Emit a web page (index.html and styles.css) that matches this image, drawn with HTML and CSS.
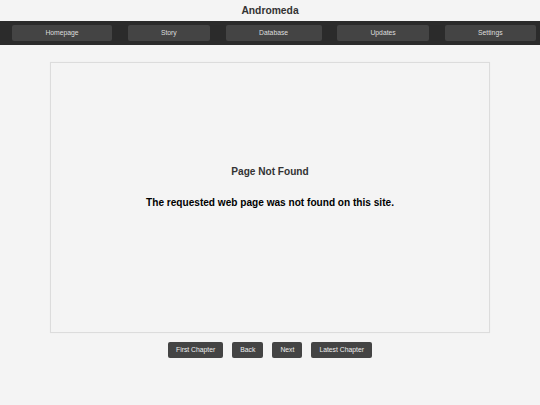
FILE: index.html
```html
<!DOCTYPE html>
<html lang="en">
<head>
<meta charset="utf-8">
<title>Andromeda</title>
<link rel="stylesheet" href="styles.css">
</head>
<body>
<header class="site-header">
  <h1 class="site-title">Andromeda</h1>
</header>
<nav class="main-nav">
  <a class="nav-btn" href="#">Homepage</a>
  <a class="nav-btn" href="#">Story</a>
  <a class="nav-btn" href="#">Database</a>
  <a class="nav-btn" href="#">Updates</a>
  <a class="nav-btn" href="#">Settings</a>
</nav>
<main class="content">
  <section class="card">
    <h2 class="card-title">Page Not Found</h2>
    <p class="card-text">The requested web page was not found on this site.</p>
  </section>
  <div class="pager">
    <a class="pager-btn" href="#">First Chapter</a>
    <a class="pager-btn" href="#">Back</a>
    <a class="pager-btn" href="#">Next</a>
    <a class="pager-btn" href="#">Latest Chapter</a>
  </div>
</main>
</body>
</html>
```

FILE: styles.css
```css
* { box-sizing: border-box; }

html, body {
  margin: 0;
  padding: 0;
  background: #f4f4f4;
  font-family: "Liberation Sans", Arial, sans-serif;
}

.site-header {
  height: 21px;
  display: flex;
  align-items: center;
  justify-content: center;
}

.site-title {
  margin: 0;
  font-size: 10.3px;
  line-height: 21px;
  font-weight: bold;
  color: #333;
}

.main-nav {
  display: flex;
  gap: 15.5px;
  height: 24px;
  padding: 4px 4px 4px 12px;
  background: #2b2b2b;
}

.nav-btn {
  flex: 1 1 auto;
  height: 16px;
  line-height: 16px;
  text-align: center;
  background: #444;
  color: #ddd;
  font-size: 6.8px;
  text-decoration: none;
  border-radius: 2px;
}

.content {
  display: flex;
  flex-direction: column;
  align-items: center;
  padding-top: 17px;
}

.card {
  width: 440px;
  height: 271px;
  border: 1px solid #dcdcdc;
  box-shadow: 0 0 1px rgba(0,0,0,0.06);
  display: flex;
  flex-direction: column;
  align-items: center;
  padding-top: 103px;
  gap: 19.5px;
}

.card-title {
  margin: 0;
  font-size: 10.1px;
  line-height: 11.5px;
  font-weight: bold;
  color: #333;
}

.card-text {
  margin: 0;
  font-size: 10.1px;
  line-height: 11.5px;
  font-weight: bold;
  color: #000;
}

.pager {
  display: flex;
  gap: 9px;
  margin-top: 9px;
}

.pager-btn {
  height: 16px;
  line-height: 16px;
  padding: 0 8px;
  background: #444;
  color: #eee;
  font-size: 6.8px;
  text-decoration: none;
  border-radius: 2px;
}
```
